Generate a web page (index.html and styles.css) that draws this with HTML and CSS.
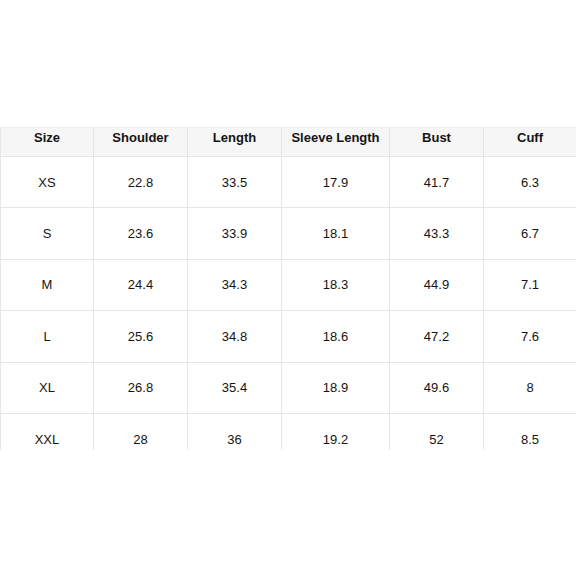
FILE: index.html
```html
<!DOCTYPE html>
<html lang="en">
<head>
<meta charset="utf-8">
<title>Size Chart</title>
<link rel="stylesheet" href="styles.css">
</head>
<body>
<div class="frame">
  <table class="chart">
    <colgroup>
      <col class="c1"><col class="c2"><col class="c3"><col class="c4"><col class="c5"><col class="c6">
    </colgroup>
    <thead>
      <tr><th>Size</th><th>Shoulder</th><th>Length</th><th>Sleeve Length</th><th>Bust</th><th>Cuff</th></tr>
    </thead>
    <tbody>
      <tr><td>XS</td><td>22.8</td><td>33.5</td><td>17.9</td><td>41.7</td><td>6.3</td></tr>
      <tr><td>S</td><td>23.6</td><td>33.9</td><td>18.1</td><td>43.3</td><td>6.7</td></tr>
      <tr><td>M</td><td>24.4</td><td>34.3</td><td>18.3</td><td>44.9</td><td>7.1</td></tr>
      <tr><td>L</td><td>25.6</td><td>34.8</td><td>18.6</td><td>47.2</td><td>7.6</td></tr>
      <tr><td>XL</td><td>26.8</td><td>35.4</td><td>18.9</td><td>49.6</td><td>8</td></tr>
      <tr><td>XXL</td><td>28</td><td>36</td><td>19.2</td><td>52</td><td>8.5</td></tr>
    </tbody>
  </table>
</div>
</body>
</html>
```
FILE: styles.css
```css
html, body {
  margin: 0;
  padding: 0;
  background: #ffffff;
}
body {
  font-family: "Liberation Sans", Arial, sans-serif;
  font-size: 13px;
  color: #141414;
}
.frame {
  margin-top: 127px;
  width: 576px;
  height: 323px;
  overflow: hidden;
}
.chart {
  width: 576px;
  border-collapse: collapse;
  table-layout: fixed;
}
.c1 { width: 93px; }
.c2 { width: 94px; }
.c3 { width: 94px; }
.c4 { width: 108px; }
.c5 { width: 94px; }
.c6 { width: 93px; }
.chart th,
.chart td {
  border: 1px solid #e6e6e6;
  text-align: center;
  line-height: 15px;
  padding: 0;
}
.chart th {
  background: #f6f6f6;
  font-weight: bold;
  height: 29px;
  vertical-align: top;
  padding-top: 2px;
  box-sizing: border-box;
}
.chart th {
  border-top-color: #f0f0f0;
}
.chart tbody tr {
  height: 51.4px;
}
.chart td {
  vertical-align: middle;
}
```
